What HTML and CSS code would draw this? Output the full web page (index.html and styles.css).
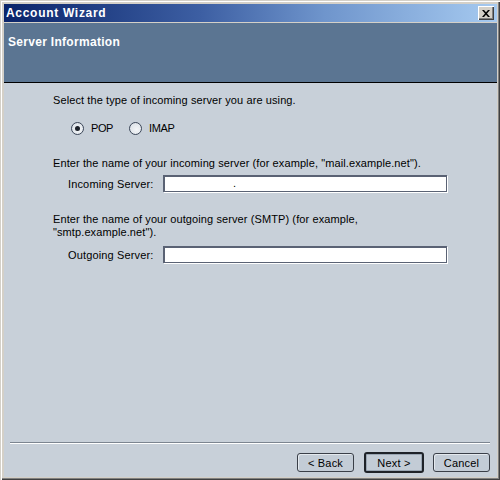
FILE: index.html
```html
<!DOCTYPE html>
<html>
<head>
<meta charset="utf-8">
<link rel="stylesheet" href="styles.css">
</head>
<body>
<div class="frame">
  <div class="window">
    <div class="titlebar">
      <span class="title">Account Wizard</span>
      <span class="close"><svg width="8" height="7" viewBox="0 0 8 7"><path d="M0 0h2l2 2.2L6 0h2L5 3.5 8 7H6L4 4.8 2 7H0l3-3.5z" fill="#000"/></svg></span>
    </div>
    <div class="header">Server Information</div>
    <div class="content">
      <div class="main">
        <p class="line">Select the type of incoming server you are using.</p>
        <div class="radios">
          <span class="radio checked"></span><span class="rlabel">POP</span>
          <span class="radio"></span><span class="rlabel">IMAP</span>
        </div>
        <p class="line gap1">Enter the name of your incoming server (for example, "mail.example.net").</p>
        <div class="field in1">
          <span class="flabel">Incoming Server:</span>
          <span class="input"><span class="dot">.</span></span>
        </div>
        <p class="line gap2">Enter the name of your outgoing server (SMTP) (for example,<br>"smtp.example.net").</p>
        <div class="field in2">
          <span class="flabel">Outgoing Server:</span>
          <span class="input"></span>
        </div>
      </div>
      <div class="footer">
        <div class="sep"></div>
        <div class="buttons">
          <span class="btn">&lt; Back</span>
          <span class="btn default">Next &gt;</span>
          <span class="btn">Cancel</span>
        </div>
      </div>
    </div>
  </div>
</div>
</body>
</html>
```
FILE: styles.css
```css
html, body {
  margin: 0;
  padding: 0;
}
body {
  width: 500px;
  height: 480px;
  overflow: hidden;
  font-family: "Liberation Sans", Arial, sans-serif;
  font-size: 11px;
  color: #000;
}
.frame {
  box-sizing: border-box;
  width: 500px;
  height: 480px;
  background: #d4d0c8;
  padding: 4px 3px 3px 4px;
  box-shadow: inset 1px 1px 0 #d4d0c8, inset 2px 2px 0 #ffffff, inset -1px -1px 0 #404040, inset -2px -2px 0 #808080;
}
.window {
  height: 100%;
  display: flex;
  flex-direction: column;
}
.titlebar {
  height: 18px;
  flex: none;
  display: flex;
  align-items: center;
  justify-content: space-between;
  background: linear-gradient(to right, #0a246a 0%, #3d5fa3 40%, #6f95cc 65%, #a6caf0 100%);
  border-bottom: 1px solid #d4d0c8;
  padding: 0 3px 0 2px;
}
.title {
  color: #fff;
  font-weight: bold;
  font-size: 12px;
  letter-spacing: 0.7px;
}
.close {
  box-sizing: border-box;
  width: 16px;
  height: 14px;
  background: #d4d0c8;
  display: flex;
  align-items: center;
  justify-content: center;
  box-shadow: inset 1px 1px 0 #fff, inset -1px -1px 0 #404040, inset -2px -2px 0 #808080;
}
.header {
  flex: none;
  background: #5b7592;
  border-bottom: 1px solid #000;
  color: #fff;
  font-weight: bold;
  font-size: 12px;
  letter-spacing: 0.3px;
  padding: 12px 0 0 4px;
  box-sizing: border-box;
  height: 60px;
}
.content {
  flex: 1;
  background: #c8d0d9;
  display: flex;
  flex-direction: column;
}
.main {
  flex: 1;
  padding: 11px 0 0 49px;
}
.line {
  margin: 0;
  line-height: 13px;
  letter-spacing: 0.1px;
}
.radios {
  display: flex;
  align-items: center;
  height: 16px;
  margin: 13px 0 0 18px;
}
.radio {
  box-sizing: border-box;
  width: 13px;
  height: 13px;
  border-radius: 50%;
  border: 1px solid #3b4658;
  background: radial-gradient(circle at 60% 60%, #f4f6f8 0%, #dfe4ea 70%, #c8d0da 100%);
  display: flex;
  align-items: center;
  justify-content: center;
}
.radio.checked::after {
  content: "";
  width: 5px;
  height: 5px;
  border-radius: 50%;
  background: #1a1f28;
}
.rlabel {
  margin: 0 16px 0 7px;
  letter-spacing: -0.4px;
}
.gap1 {
  margin-top: 21px;
}
.gap2 {
  margin-top: 21px;
}
.field {
  display: flex;
  align-items: center;
  height: 17px;
  margin-left: 15px;
}
.in1 {
  margin-top: 5px;
}
.in2 {
  margin-top: 7px;
}
.flabel {
  width: 95px;
  letter-spacing: 0.15px;
}
.input {
  box-sizing: border-box;
  width: 284px;
  height: 17px;
  background: #fff;
  border: 1px solid #5a6274;
  border-top-width: 2px;
  border-left-width: 2px;
  box-shadow: 1px 1px 0 #fff;
  position: relative;
}
.dot {
  position: absolute;
  left: 68px;
  top: 0;
  line-height: 13px;
}
.footer {
  flex: none;
  padding: 0 7px 4px 6px;
}
.sep {
  border-top: 1px solid #7c8590;
  border-bottom: 1px solid #fff;
}
.buttons {
  display: flex;
  justify-content: flex-end;
  align-items: center;
  gap: 9px;
  margin-top: 8px;
  height: 21px;
}
.btn {
  box-sizing: border-box;
  height: 19px;
  width: 57px;
  border: 1px solid #3a3f48;
  border-radius: 3px;
  background: #c3ccd6;
  box-shadow: inset 1px 1px 0 #e4e9ee;
  display: flex;
  align-items: center;
  justify-content: center;
  font-size: 11px;
  letter-spacing: 0.2px;
}
.btn.default {
  width: 60px;
  height: 21px;
  border: 2px solid #1e2228;
  box-shadow: 0 0 0 1px #9aa6b3 inset;
}
.btn:first-child {
  margin-right: 1px;
}
```
